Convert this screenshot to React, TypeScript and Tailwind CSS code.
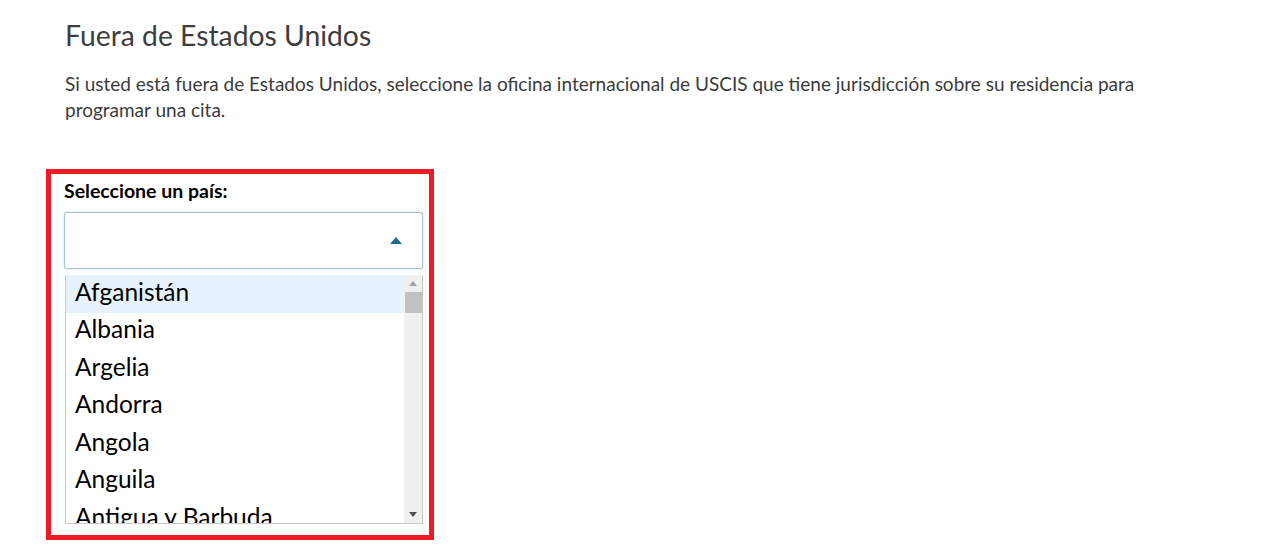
import React from 'react';

const countries = ['Afganistán', 'Albania', 'Argelia', 'Andorra', 'Angola', 'Anguila', 'Antigua y Barbuda'];

const CountryList: React.FC = () => (
  <div className="flex h-[249px] w-[358px] ml-px mt-[6px] border border-t-0 border-[#c8c8c8] bg-white overflow-hidden">
    <ul className="flex-1 overflow-hidden">
      {countries.map((c, i) => (
        <li
          key={c}
          className={`h-[37.5px] pl-[9px] pb-[4px] flex items-center text-[24.5px] leading-none text-black ${
            i === 0 ? 'bg-[#e6f3fc]' : ''
          }`}
        >
          {c}
        </li>
      ))}
    </ul>
    <div className="w-[18px] bg-[#f0f0f0] flex flex-col items-center">
      <div className="h-[17px] flex items-center justify-center">
        <svg width="8" height="5" viewBox="0 0 8 5">
          <path d="M0 5 L4 0 L8 5 Z" fill="#a3a3a3" />
        </svg>
      </div>
      <div className="w-[17px] h-[21px] bg-[#c1c1c1]" />
      <div className="flex-1" />
      <div className="h-[17px] flex items-center justify-center">
        <svg width="8" height="5" viewBox="0 0 8 5">
          <path d="M0 0 L4 5 L8 0 Z" fill="#505050" />
        </svg>
      </div>
    </div>
  </div>
);

export default function App() {
  return (
    <div className="w-[1265px] h-[547px] bg-white overflow-hidden font-['Lato',sans-serif]">
      <div className="pl-[65px] pt-[17px]">
        <h2 className="text-[28.3px] leading-[36px] text-[#3d3d3d]">Fuera de Estados Unidos</h2>
        <p className="mt-[18px] w-[1085px] text-[19px] leading-[26px] text-[#3b3b3b]">
          Si usted está fuera de Estados Unidos, seleccione la oficina internacional de USCIS que
          tiene jurisdicción sobre su residencia para programar una cita.
        </p>
      </div>
      <div className="ml-[46px] mt-[46px] w-[388px] h-[371px] border-[5px] border-[#ed1c24] pl-[13px] pt-[6px]">
        <label className="block text-[19.5px] leading-[22px] font-bold text-black">
          Seleccione un país:
        </label>
        <div className="mt-[10px] w-[359px] h-[57px] rounded-[3px] border border-[#a6c3d3] shadow-[0_0_2px_rgba(90,140,170,0.45)] bg-white flex items-center justify-end pr-[20px]">
          <svg width="12" height="7" viewBox="0 0 12 7">
            <path d="M0 7 L6 0 L12 7 Z" fill="#1c6a92" />
          </svg>
        </div>
        <CountryList />
      </div>
    </div>
  );
}
